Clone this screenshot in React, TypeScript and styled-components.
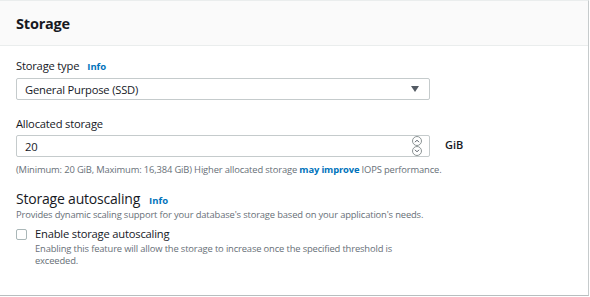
import React from 'react';
import styled, {createGlobalStyle} from 'styled-components';

const GlobalStyle = createGlobalStyle`
  body {
    margin: 0;
    background: #ffffff;
    font-family: "Open Sans", "Noto Sans", sans-serif;
    color: #16191f;
  }
`

const Panel = styled.section`
  width: 589px;
  height: 296px;
  box-sizing: border-box;
  border-right: 1px solid #c6cbcc;
  border-bottom: 1px solid #b8bebf;
  border-top: 1px solid #eaeded;
  display: flex;
  flex-direction: column;
`

const Header = styled.div`
  height: 45px;
  box-sizing: border-box;
  background: #fafafa;
  border-bottom: 1px solid #eaeded;
  padding: 1px 16px 0 16px;
  display: flex;
  align-items: center;
`

const Title = styled.h2`
  margin: 0;
  font-size: 14.5px;
  font-weight: 700;
  letter-spacing: -0.2px;
  color: #16191f;
`

const Body = styled.div`
  padding: 12px 16px 0 16px;
  display: flex;
  flex-direction: column;
`

const Field = styled.div<{ gap?: number }>`
  display: flex;
  flex-direction: column;
  margin-bottom: ${p => p.gap ?? 0}px;
`

const Label = styled.div`
  font-size: 11.2px;
  font-weight: 500;
  letter-spacing: -0.2px;
  line-height: 16px;
  margin-bottom: 3px;
  display: flex;
  align-items: baseline;
  gap: 8px;
`

const Info = styled.span`
  font-size: 9.5px;
  font-weight: 700;
  color: #0073bb;
  letter-spacing: 0;
`

const Row = styled.div`
  display: flex;
  align-items: flex-start;
  gap: 15px;
`

const Box = styled.div`
  width: 414px;
  height: 22px;
  box-sizing: border-box;
  border: 1px solid #c5cbcc;
  border-radius: 2px;
  padding: 0 8px;
  display: flex;
  align-items: center;
  justify-content: space-between;
  font-size: 11.2px;
  font-weight: 500;
  letter-spacing: -0.2px;
  color: #16191f;
`

const Caret = styled.span`
  width: 0;
  height: 0;
  border-left: 4px solid transparent;
  border-right: 4px solid transparent;
  border-top: 6px solid #545b64;
  margin-right: 2px;
`

const Spinner = styled.div`
  display: flex;
  flex-direction: column;
  margin-right: -1px;
`

const SpinButton = styled.span`
  width: 10px;
  height: 10px;
  box-sizing: border-box;
  border: 1px solid #8d9596;
  border-radius: 50%;
  display: flex;
  align-items: center;
  justify-content: center;
`

const Unit = styled.span`
  font-size: 11px;
  font-weight: 600;
  line-height: 16px;
  margin-top: 2px;
`

const Hint = styled.div<{ width?: number }>`
  font-size: 9.4px;
  color: #687078;
  line-height: 12px;
  letter-spacing: -0.15px;
  ${p => p.width ? `width: ${p.width}px;` : ''}
`

const FieldHint = styled(Hint)`
  margin-top: 7px;
`

const Strong = styled.b`
  color: #0073bb;
  font-weight: 700;
`

const SubTitle = styled.div`
  font-size: 14px;
  line-height: 17px;
  letter-spacing: -0.2px;
  display: flex;
  align-items: baseline;
  gap: 9px;
  color: #16191f;
`

const CheckRow = styled.label`
  display: flex;
  align-items: flex-start;
  gap: 8px;
  margin-top: 6px;
`

const CheckBox = styled.span`
  width: 9px;
  height: 9px;
  margin-top: 2px;
  border: 1px solid #aab7b8;
  border-radius: 2px;
  flex-shrink: 0;
`

const CheckText = styled.div`
  display: flex;
  flex-direction: column;
  gap: 2px;
`

const CheckLabel = styled.div`
  font-size: 11.2px;
  font-weight: 500;
  line-height: 14px;
  letter-spacing: -0.2px;
`

const Arrow = ({up}: { up: boolean }) => (
  <svg width="6" height="4" viewBox="0 0 6 4">
    <path d={up ? 'M1 3.2 L3 1.2 L5 3.2' : 'M1 0.8 L3 2.8 L5 0.8'} fill="none" stroke="#545b64" strokeWidth="1"/>
  </svg>
)

export default function App() {
  return (
    <>
      <GlobalStyle/>
      <Panel>
        <Header>
          <Title>Storage</Title>
        </Header>
        <Body>
          <Field gap={16}>
            <Label>Storage type <Info>Info</Info></Label>
            <Box>
              General Purpose (SSD)
              <Caret/>
            </Box>
          </Field>
          <Field gap={14}>
            <Label>Allocated storage</Label>
            <Row>
              <Box>
                20
                <Spinner>
                  <SpinButton><Arrow up={true}/></SpinButton>
                  <SpinButton><Arrow up={false}/></SpinButton>
                </Spinner>
              </Box>
              <Unit>GiB</Unit>
            </Row>
            <FieldHint>
              (Minimum: 20 GiB, Maximum: 16,384 GiB) Higher allocated storage <Strong>may improve</Strong> IOPS performance.
            </FieldHint>
          </Field>
          <SubTitle>Storage autoscaling <Info>Info</Info></SubTitle>
          <Hint>Provides dynamic scaling support for your database's storage based on your application's needs.</Hint>
          <CheckRow>
            <CheckBox/>
            <CheckText>
              <CheckLabel>Enable storage autoscaling</CheckLabel>
              <Hint width={365}>
                Enabling this feature will allow the storage to increase once the specified threshold is exceeded.
              </Hint>
            </CheckText>
          </CheckRow>
        </Body>
      </Panel>
    </>
  );
}
